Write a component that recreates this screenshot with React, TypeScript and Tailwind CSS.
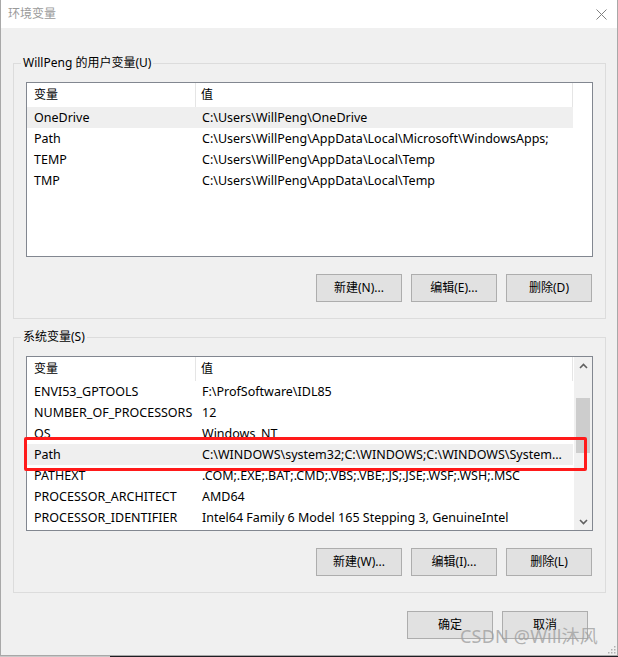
const USER_VARS = [
  { name: 'OneDrive', value: 'C:\\Users\\WillPeng\\OneDrive', selected: true },
  { name: 'Path', value: 'C:\\Users\\WillPeng\\AppData\\Local\\Microsoft\\WindowsApps;' },
  { name: 'TEMP', value: 'C:\\Users\\WillPeng\\AppData\\Local\\Temp' },
  { name: 'TMP', value: 'C:\\Users\\WillPeng\\AppData\\Local\\Temp' },
];

const SYSTEM_VARS = [
  { name: 'ENVI53_GPTOOLS', value: 'F:\\ProfSoftware\\IDL85' },
  { name: 'NUMBER_OF_PROCESSORS', value: '12' },
  { name: 'OS', value: 'Windows_NT' },
  { name: 'Path', value: 'C:\\WINDOWS\\system32;C:\\WINDOWS;C:\\WINDOWS\\System...', selected: true },
  { name: 'PATHEXT', value: '.COM;.EXE;.BAT;.CMD;.VBS;.VBE;.JS;.JSE;.WSF;.WSH;.MSC' },
  { name: 'PROCESSOR_ARCHITECT', value: 'AMD64' },
  { name: 'PROCESSOR_IDENTIFIER', value: 'Intel64 Family 6 Model 165 Stepping 3, GenuineIntel' },
];

type Row = { name: string; value: string; selected?: boolean };

const Button = ({ label }: { label: string }) => (
  <button className="w-[86px] h-[28px] bg-[#e1e1e1] border border-[#adadad] text-[12px] text-black flex items-center justify-center">
    {label}
  </button>
);

const VarList = ({ rows, scroll }: { rows: Row[]; scroll?: boolean }) => (
  <div className="h-[175px] border border-[#828790] bg-white flex overflow-hidden">
    <div className="w-[546px] flex flex-col">
      {/* header */}
      <div className="h-[24px] shrink-0 grid grid-cols-[169px_377px] text-[12px]">
        <div className="pl-[7px] flex items-center border-r border-[#e5e5e5]">变量</div>
        <div className="pl-[5px] flex items-center border-r border-[#e5e5e5]">值</div>
      </div>
      {rows.map((r) => (
        <div
          key={r.name}
          className={`h-[21px] shrink-0 grid grid-cols-[169px_377px] text-[12.5px] leading-[21px] whitespace-nowrap ${r.selected ? 'bg-[#efefef]' : ''}`}
        >
          <div className="pl-[7px] overflow-hidden">{r.name}</div>
          <div className="pl-[6px] overflow-hidden">{r.value}</div>
        </div>
      ))}
    </div>
    {scroll ? (
      <div className="ml-[1px] w-[18px] bg-[#f0f0f0] flex flex-col items-center">
        <div className="h-[17px] w-full flex items-center justify-center">
          <svg width="9" height="6" viewBox="0 0 9 6">
            <path d="M1 5 L4.5 1.5 L8 5" stroke="#606060" strokeWidth="1.6" fill="none" />
          </svg>
        </div>
        <div className="h-[24px]" />
        <div className="w-[14px] h-[55px] bg-[#cdcdcd]" />
        <div className="flex-1" />
        <div className="h-[17px] w-full flex items-center justify-center">
          <svg width="9" height="6" viewBox="0 0 9 6">
            <path d="M1 1 L4.5 4.5 L8 1" stroke="#606060" strokeWidth="1.6" fill="none" />
          </svg>
        </div>
      </div>
    ) : null}
  </div>
);

const Group = ({ title, rows, buttons, scroll }: { title: string; rows: Row[]; buttons: string[]; scroll?: boolean }) => (
  <div className="relative h-[256px] border border-[#dcdcdc] pt-[18px] px-[12px]">
    <span className="absolute left-[7px] top-[-9px] px-[2px] bg-[#f0f0f0] text-[12px] leading-[16px]">{title}</span>
    <VarList rows={rows} scroll={scroll} />
    <div className="mt-[17px] pr-[1px] flex justify-end gap-[9px]">
      {buttons.map((b) => (
        <Button key={b} label={b} />
      ))}
    </div>
  </div>
);

export default function App() {
  return (
    <div className="w-[618px] h-[657px] flex flex-col font-['Noto_Sans','Noto_Sans_CJK_SC',sans-serif] text-black">
      <div className="relative flex-1 flex flex-col border-l border-r border-b border-[#a8a8a8] bg-[#f0f0f0]">
        {/* title bar */}
        <div className="h-[28px] bg-white flex items-center justify-between pl-[7px] pr-[10px]">
          <span className="text-[12px] text-[#9a9a9a]">环境变量</span>
          <svg width="11" height="11" viewBox="0 0 11 11">
            <path d="M0.5 0.5 L10.5 10.5 M10.5 0.5 L0.5 10.5" stroke="#808080" strokeWidth="1" />
          </svg>
        </div>

        <div className="pt-[35px] pl-[12px] pr-[11px]">
          <Group
            title="WillPeng 的用户变量(U)"
            rows={USER_VARS}
            buttons={['新建(N)...', '编辑(E)...', '删除(D)']}
          />
          <div className="h-[18px]" />
          <Group
            title="系统变量(S)"
            rows={SYSTEM_VARS}
            buttons={['新建(W)...', '编辑(I)...', '删除(L)']}
            scroll
          />
        </div>

        <div className="mt-[18px] pr-[29px] flex justify-end gap-[9px]">
          <Button label="确定" />
          <Button label="取消" />
        </div>

        {/* red annotation box */}
        <div className="absolute left-[23px] top-[437px] w-[563px] h-[34px] border-[3px] border-[#ff1a1a] rounded-[2px]" />

        {/* watermark */}
        <span className="absolute left-[459px] top-[623px] text-[18px] text-[#a0a0a0]/80 tracking-[0.2px]">CSDN @Will沐风</span>

        {/* resize grip */}
        <svg className="absolute right-[1px] bottom-[1px]" width="8" height="8" viewBox="0 0 8 8">
          <rect x="6" y="0" width="1.5" height="1.5" fill="#b0b0b0" />
          <rect x="3" y="3" width="1.5" height="1.5" fill="#b0b0b0" />
          <rect x="6" y="3" width="1.5" height="1.5" fill="#b0b0b0" />
          <rect x="0" y="6" width="1.5" height="1.5" fill="#b0b0b0" />
          <rect x="3" y="6" width="1.5" height="1.5" fill="#b0b0b0" />
          <rect x="6" y="6" width="1.5" height="1.5" fill="#b0b0b0" />
        </svg>
      </div>
      <div className="h-[1px] flex">
        <div className="w-[110px] bg-[#c8c8c8]" />
        <div className="flex-1 bg-[#1e1e24]" />
      </div>
    </div>
  );
}
